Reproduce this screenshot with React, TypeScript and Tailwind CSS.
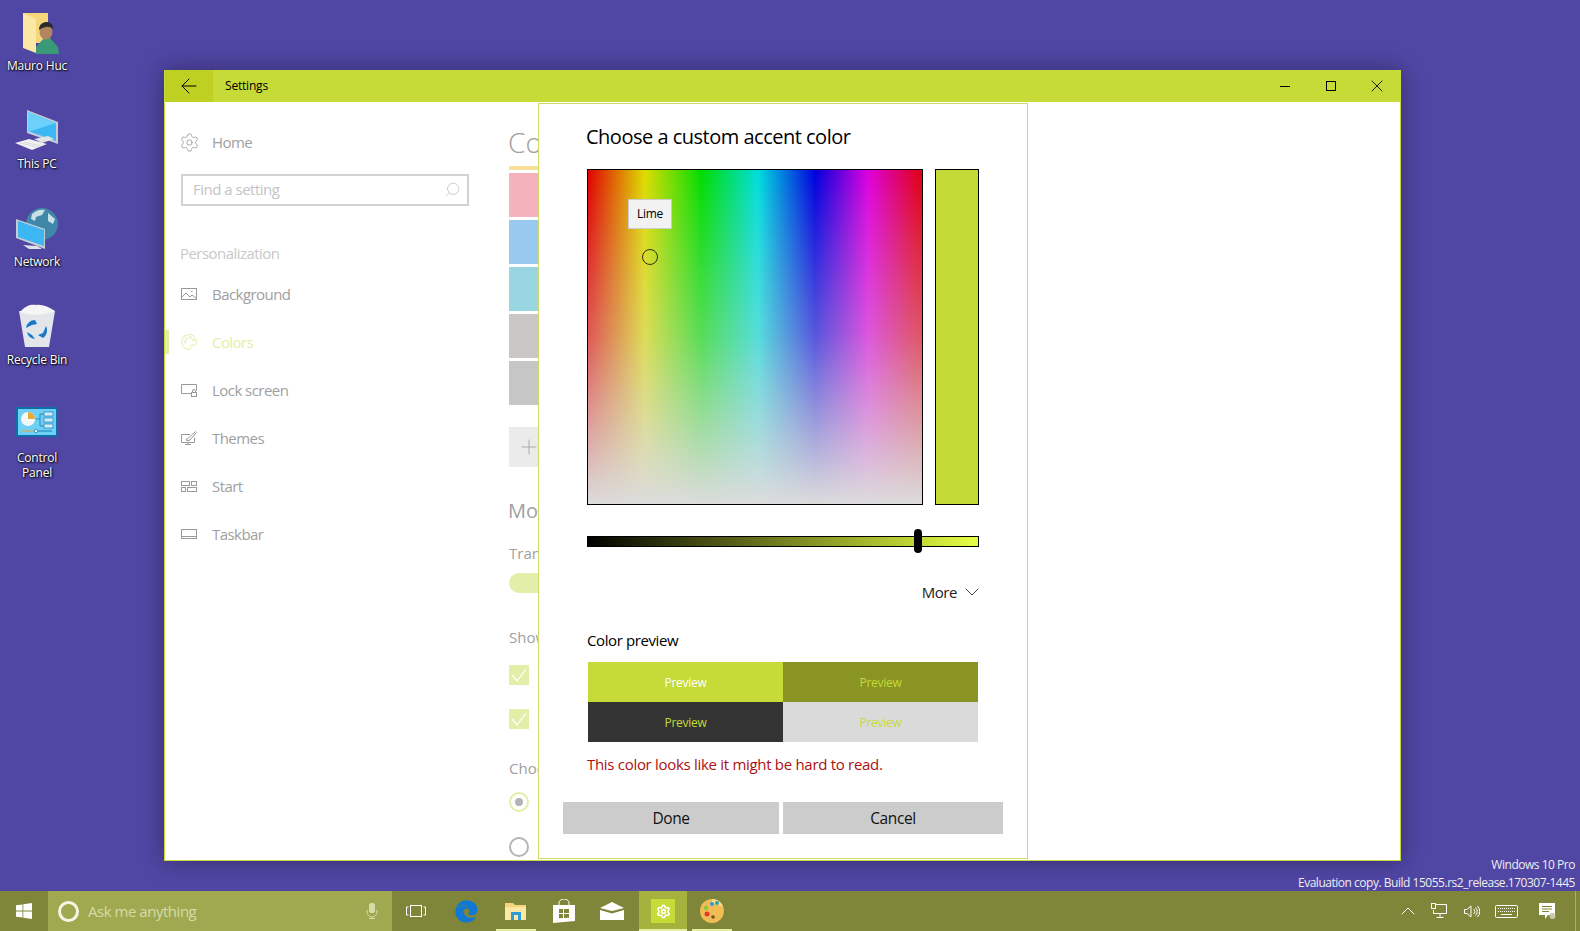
import { ArrowLeft, ChevronDown, ChevronUp, Plus, Search, Settings, X } from "lucide-react";
import { FaEdge } from "react-icons/fa";
import type { ReactNode } from "react";

const font = "font-['Open_Sans','Noto_Sans',sans-serif]";

function UserFolderIcon() {
  return (
    <svg width="44" height="44" viewBox="0 0 44 44">
      <path d="M8 1h25v30H8z" fill="#f6d67a" />
      <path d="M8 1l13 6v34L8 36z" fill="#fbe7a6" />
      <path d="M21 35l8-9h6l8 9 1 7H21z" fill="#3a9a78" />
      <ellipse cx="31" cy="20" rx="6.5" ry="7.5" fill="#b08560" />
      <path d="M24 18c0-6 4-8 8-8s6 3 6 7c-3-3-8-3-14 1z" fill="#2b2b2b" />
    </svg>
  );
}

function PcIcon() {
  return (
    <svg width="46" height="44" viewBox="0 0 46 44">
      <path d="M13 0l31 12v22L13 23z" fill="#c5ccd3" />
      <path d="M14 2l28 11v18L14 21z" fill="#3cb7f4" />
      <path d="M14 2l28 11-28 9z" fill="#6bd0fb" />
      <path d="M20 29l14-3 6 3-12 4z" fill="#dfe3e6" />
      <path d="M1 33l14-4 18 5-15 6z" fill="#f0f0f0" />
      <path d="M6 33l17 4M10 32l17 4" stroke="#c8ccd0" strokeWidth="0.6" />
    </svg>
  );
}

function NetworkIcon() {
  return (
    <svg width="44" height="44" viewBox="0 0 44 44">
      <circle cx="27" cy="16" r="16" fill="#3f87a8" />
      <path d="M17 6c4-4 9-5 13-4l-3 5-6 2-1 4-4-2zM33 5l7 6-2 5-5-3z" fill="#c9e0e8" />
      <path d="M1 11l29 10v20L1 30z" fill="#c5ccd3" />
      <path d="M3 13l26 9v16L3 29z" fill="#3cb7f4" />
      <path d="M8 37l14 1 5 3H14z" fill="#dfe3e6" />
    </svg>
  );
}

function BinIcon() {
  return (
    <svg width="44" height="46" viewBox="0 0 44 46">
      <path d="M4 7l36 0-6 36-24 0z" fill="#e2e6ea" />
      <path d="M5 8c6-7 12-8 16-7 6-1 13 2 19 6-8 4-26 5-35 1z" fill="#f5f5f5" />
      <path d="M11 24a9 9 0 0 1 9-8l2 4-5 1zM31 22a9 9 0 0 1-3 12l-5-3 5-2zM12 28l5 3 3 4a9 9 0 0 1-8-7z" fill="#1a78c8" />
    </svg>
  );
}

function ControlPanelIcon() {
  return (
    <svg width="42" height="30" viewBox="0 0 42 30" className="mb-[11px]">
      <rect width="42" height="30" fill="#0f6ea8" />
      <rect x="2" y="2" width="38" height="26" fill="#6fd0f5" />
      <circle cx="12" cy="12" r="7" fill="#f4f8fb" />
      <path d="M12 5a7 7 0 0 1 7 7h-7z" fill="#e9a93a" />
      <rect x="28" y="5" width="9" height="4" fill="#cfeefa" stroke="#1b7cb5" strokeWidth="0.7" />
      <rect x="28" y="11" width="9" height="4" fill="#cfeefa" stroke="#1b7cb5" strokeWidth="0.7" />
      <rect x="28" y="17" width="9" height="4" fill="#cfeefa" stroke="#1b7cb5" strokeWidth="0.7" />
      <path d="M20 12h4V7h4M24 12v7h4" fill="none" stroke="#1b7cb5" strokeWidth="0.8" />
      <path d="M6 24h12" stroke="#e9a93a" strokeWidth="1" />
      <path d="M22 24h14" stroke="#1b7cb5" strokeWidth="1" />
      <circle cx="20" cy="24" r="1.7" fill="#eaf8fd" stroke="#1b7cb5" strokeWidth="0.7" />
    </svg>
  );
}

function DesktopIcon({ icon, label, top }: { icon: ReactNode; label: ReactNode; top: string }) {
  return (
    <div className={`absolute left-0 w-[74px] flex flex-col items-center ${top}`}>
      <div className="h-[46px] flex items-end justify-center">{icon}</div>
      <div className="mt-[2px] text-center text-[12px] leading-[15px] tracking-[-0.2px] text-white [text-shadow:1px_1px_2px_#000,0_0_2px_#000]">
        {label}
      </div>
    </div>
  );
}

function NavRow({ icon, label, active }: { icon: ReactNode; label: string; active?: boolean }) {
  return (
    <div className="relative flex h-12 items-center pl-4">
      {active && <div className="absolute left-0 top-3 h-6 w-1 bg-[#e3eea8]" />}
      <div className={`flex w-4 justify-center ${active ? "text-[#e3eea8]" : "text-[#9a9a9a]"}`}>{icon}</div>
      <span className={`ml-[15px] text-[15px] tracking-[-0.55px] ${active ? "text-[#e3eea8]" : "text-[#a0a0a0]"}`}>{label}</span>
    </div>
  );
}

function PreviewCell({ bg, text }: { bg: string; text: string }) {
  return <div className={`flex items-center justify-center pt-px text-[12px] tracking-[-0.3px] ${bg} ${text}`}>Preview</div>;
}

function Swatch({ color }: { color: string }) {
  return <div className={`h-11 w-[44px] ${color}`} />;
}

const BackgroundIcon = (
  <svg width="16" height="12" viewBox="0 0 16 12" fill="none" stroke="currentColor">
    <rect x="0.5" y="0.5" width="15" height="11" />
    <path d="M1 9l4-4 4 4 2-2 4 3M10 3.5h1.5" />
  </svg>
);
const PaletteIcon = (
  <svg width="16" height="16" viewBox="0 0 16 16" fill="none" stroke="currentColor">
    <path d="M8 .5a7.5 7.5 0 1 0 0 15c1.5 0 2-1 1.6-2-.5-1.300.3-2.500 1.700-2.500h2.400c1.200 0 1.800-1 1.800-2.500C15.500 3.500 12 .5 8 .5z" />
    <circle cx="4" cy="8" r="1" />
    <circle cx="5.500" cy="4.500" r="1" />
    <circle cx="9.500" cy="3.500" r="1" />
    <circle cx="12.500" cy="6" r="1" />
  </svg>
);
const LockIcon = (
  <svg width="16" height="13" viewBox="0 0 16 13" fill="none" stroke="currentColor">
    <path d="M10 9.500H.5v-9h15v6" />
    <rect x="10.500" y="8.500" width="5" height="4" />
    <path d="M11.500 8.500V7a1.500 1.500 0 0 1 3 0v1.500" />
  </svg>
);
const ThemesIcon = (
  <svg width="16" height="14" viewBox="0 0 16 14" fill="none" stroke="currentColor">
    <path d="M9 3.500H.5v8h13V7M7 11.500v2M4 13.500h6" />
    <path d="M5 8.500l2-1 7.500-7 1 1-6.500 7.500-3 1z" />
  </svg>
);
const StartIcon = (
  <svg width="16" height="11" viewBox="0 0 16 11" fill="none" stroke="currentColor">
    <rect x="0.500" y="0.500" width="8" height="4" />
    <rect x="10.500" y="0.500" width="5" height="4" />
    <rect x="0.500" y="6.500" width="4" height="4" />
    <rect x="6.500" y="6.500" width="9" height="4" />
  </svg>
);
const TaskbarIcon = (
  <svg width="16" height="10" viewBox="0 0 16 10" fill="none" stroke="currentColor">
    <rect x="0.500" y="0.500" width="15" height="9" />
    <path d="M1 7.500h14" />
  </svg>
);

function ColorDialog() {
  return (
    <div className="absolute left-[538px] top-[103px] flex h-[756px] w-[490px] flex-col border border-[#cfdc6a] bg-white text-black">
      <h2 className="ml-[47px] mt-[18px] text-[20px] leading-[30px] tracking-[-0.5px]">Choose a custom accent color</h2>

      <div className="ml-[48px] mt-[17px] flex gap-3">
        <div className="relative h-[336px] w-[336px] border border-black bg-[linear-gradient(to_bottom,transparent_0%,rgba(220,220,220,0.4)_50%,#dcdcdc_100%),linear-gradient(to_right,#e00000,#dedc00_17%,#00dd00_34%,#00dddd_51%,#0000dd_68%,#dd00dd_84%,#e00010)]">
          <div className="absolute left-[40px] top-[29px] flex h-[30px] w-[44px] items-center justify-center border border-[#cccccc] bg-[#f2f2f2] text-[12px] tracking-[-0.3px]">
            Lime
          </div>
          <div className="absolute left-[54px] top-[79px] h-4 w-4 rounded-full border-[1.5px] border-[#2c3310]" />
        </div>
        <div className="h-[336px] w-[44px] border border-black bg-[#c4da36]" />
      </div>

      <div className="relative ml-[48px] mt-[31px] h-[11px] w-[392px] border border-black bg-[linear-gradient(to_right,#000000,#c4da36_85%,#e6ff44)]">
        <div className="absolute left-[326px] top-[-8px] h-6 w-2 rounded-full bg-black" />
      </div>

      <div className="ml-[48px] mt-[33px] flex h-6 w-[392px] items-center justify-end gap-[3px]">
        <span className="pt-px text-[15px] tracking-[-0.45px] text-[#222]">More</span>
        <ChevronDown size={24} strokeWidth={1} className="-mr-[5px] text-[#444]" />
      </div>

      <div className="ml-[48px] mt-[25px] text-[15px] leading-[22px] tracking-[-0.4px]">Color preview</div>

      <div className="ml-[49px] mt-[11px] grid h-[80px] w-[390px] grid-cols-[195px_195px] grid-rows-2">
        <PreviewCell bg="bg-[#c6da38]" text="text-white" />
        <PreviewCell bg="bg-[#899423]" text="text-[#c6da38]" />
        <PreviewCell bg="bg-[#333333]" text="text-[#c6da38]" />
        <PreviewCell bg="bg-[#dadada]" text="text-[#c6da38]" />
      </div>

      <div className="ml-[48px] mt-[11px] text-[15px] leading-[22px] tracking-[-0.3px] text-[#ad1010]">
        This color looks like it might be hard to read.
      </div>

      <div className="ml-[24px] mt-[27px] flex gap-1">
        <button className="h-8 w-[216px] bg-[#cccccc] pt-px text-[15.5px] tracking-[-0.4px] text-[#111]">Done</button>
        <button className="h-8 w-[220px] bg-[#cccccc] pt-px text-[15.5px] tracking-[-0.4px] text-[#111]">Cancel</button>
      </div>
    </div>
  );
}

function SettingsWindow() {
  return (
    <div className="absolute left-[164px] top-[70px] flex h-[791px] w-[1237px] flex-col border-x border-b border-[#c6da38] bg-white shadow-[0_0_22px_rgba(0,0,0,0.35)]">
      <div className="flex h-8 shrink-0 items-center bg-[#c6da38] text-black">
        <div className="flex h-8 w-12 items-center justify-center bg-[#bed021]">
          <ArrowLeft size={24} strokeWidth={1} />
        </div>
        <span className="ml-3 text-[12px] tracking-[-0.2px]">Settings</span>
        <div className="ml-auto flex">
          <div className="flex h-8 w-[46px] items-center justify-center"><div className="h-px w-[10px] bg-black" /></div>
          <div className="flex h-8 w-[46px] items-center justify-center"><div className="h-[10px] w-[10px] border border-black" /></div>
          <div className="flex h-8 w-[46px] items-center justify-center"><X size={20} strokeWidth={1} /></div>
        </div>
      </div>

      <div className="flex min-h-0 flex-1">
        <div className="w-[344px] shrink-0 pt-[16px]">
          <NavRow icon={<Settings size={21} strokeWidth={1} className="shrink-0" />} label="Home" />
          <div className="ml-4 mt-[8px] flex h-8 w-[288px] items-center justify-between border-2 border-[#d2d2d2] pb-px pl-[10px] pr-[6px]">
            <span className="text-[15px] tracking-[-0.5px] text-[#c4c4c4]">Find a setting</span>
            <Search size={17} strokeWidth={1} className="-scale-x-100 text-[#bbbbbb]" />
          </div>
          <div className="ml-[15px] mt-[37px] text-[15px] leading-[20px] tracking-[-0.55px] text-[#c8c8c8]">Personalization</div>
          <div className="mt-[7px]">
            <NavRow icon={BackgroundIcon} label="Background" />
            <NavRow icon={PaletteIcon} label="Colors" active />
            <NavRow icon={LockIcon} label="Lock screen" />
            <NavRow icon={ThemesIcon} label="Themes" />
            <NavRow icon={StartIcon} label="Start" />
            <NavRow icon={TaskbarIcon} label="Taskbar" />
          </div>
        </div>

        {/* rest of this column sits behind the dialog, only the start of each line shows */}
        <div className="min-w-0 flex-1 pt-[21px] text-[#a0a0a0]">
          <div className="-ml-px text-[28px] font-light leading-[38px]">Co</div>
          <div className="mt-[5px] h-1 w-[44px] bg-[#fbe09a]" />
          <div className="mt-[3px] flex flex-col gap-[3px]">
            <Swatch color="bg-[#f4b3bc]" />
            <Swatch color="bg-[#99c9ee]" />
            <Swatch color="bg-[#98d6e1]" />
            <Swatch color="bg-[#c9c8c6]" />
            <Swatch color="bg-[#c6c6c6]" />
          </div>
          <div className="mt-[22px] flex h-10 w-10 items-center justify-center bg-[#ebebeb]">
            <Plus size={24} strokeWidth={1} className="text-[#aaaaaa]" />
          </div>
          <div className="-ml-px mt-[27px] text-[20px] leading-[34px] text-[#a0a0a0]">Mo</div>
          <div className="mt-[15px] text-[15px] leading-[20px]">Trans</div>
          <div className="mt-[10px] h-5 w-[44px] rounded-full bg-[#e3eea8]" />
          <div className="mt-[34px] text-[15px] leading-[20px]">Show</div>
          <div className="mt-[18px] flex h-5 w-5 items-center justify-center bg-[#e3eea8]">
            <svg width="16" height="14" viewBox="0 0 16 14" fill="none" stroke="#fff" strokeWidth="1.200"><path d="M1 7l5 6L15 1" /></svg>
          </div>
          <div className="mt-[24px] flex h-5 w-5 items-center justify-center bg-[#e3eea8]">
            <svg width="16" height="14" viewBox="0 0 16 14" fill="none" stroke="#fff" strokeWidth="1.200"><path d="M1 7l5 6L15 1" /></svg>
          </div>
          <div className="mt-[29px] text-[15px] leading-[20px]">Choo</div>
          <div className="mt-[14px] flex h-5 w-5 items-center justify-center rounded-full border-2 border-[#e3eea8]">
            <div className="h-2 w-2 rounded-full bg-[#b4b4b4]" />
          </div>
          <div className="mt-[25px] h-5 w-5 rounded-full border-2 border-[#b4b4b4]" />
        </div>
      </div>
    </div>
  );
}

function Taskbar() {
  return (
    <div className="relative flex h-10 shrink-0 items-center bg-[#7f8639] text-white">
      <div className="flex h-10 w-12 items-center justify-center">
        <svg width="16" height="16" viewBox="0 0 16 16" fill="#fff">
          <path d="M0 2.300l6.500-.9v6.200H0zM7.300 1.300L16 0v7.600H7.300zM0 8.400h6.500v6.200L0 13.700zM7.300 8.400H16V16l-8.700-1.300z" />
        </svg>
      </div>
      <div className="flex h-10 w-[344px] items-center bg-[#a0a94f] pl-[10px]">
        <div className="h-[21px] w-[21px] rounded-full border-[3px] border-[#f4f6e4]" />
        <span className="ml-[9px] text-[15px] tracking-[-0.47px] text-[#d6dbab]">Ask me anything</span>
        <svg className="ml-auto mr-[14px]" width="12" height="16" viewBox="0 0 12 16" fill="none" stroke="#d6dbab">
          <rect x="3.500" y="0.500" width="5" height="9" rx="1.500" fill="#d6dbab" />
          <path d="M1 7v2a5 5 0 0 0 10 0V7M6 14v2M3 15.500h6" />
        </svg>
      </div>

      <div className="flex h-10 w-[48px] items-center justify-center">
        <svg width="20" height="12" viewBox="0 0 20 12" fill="none" stroke="#fff">
          <rect x="4.500" y="0.500" width="11" height="11" />
          <path d="M2.500 2H.500v8h2M17.500 2h2v8h-2" />
        </svg>
      </div>
      <div className="flex h-10 w-[52px] items-center justify-center"><FaEdge size={23} className="text-[#0f78d4]" /></div>

      <div className="relative flex h-10 w-[48px] items-center justify-center">
        <svg width="22" height="18" viewBox="0 0 22 18">
          <path d="M0 1h8l2 2h11v15H0z" fill="#f6d67a" />
          <path d="M0 5h21v13H0z" fill="#fbe7a6" />
          <path d="M6 10h10v8H6z" fill="#2f9ad8" />
          <path d="M9 13h4v5H9z" fill="#fbe7a6" />
        </svg>
        <div className="absolute bottom-0 left-[4px] h-[2px] w-10 bg-[#e3eea0]" />
      </div>
      <div className="flex h-10 w-[48px] items-center justify-center">
        <svg width="22" height="24" viewBox="0 0 22 24" fill="#fff">
          <path d="M0 6h22v16l-22 2z" />
          <path d="M6 6V4a5 4 0 0 1 10 0v2" fill="none" stroke="#fff" strokeWidth="1" />
          <path d="M6 10h4v4H6zM11 10h5v4h-5zM6 15h4v4l-4 .3zM11 15h5v3.700l-5 .3z" fill="#7f8639" />
        </svg>
      </div>
      <div className="flex h-10 w-[48px] items-center justify-center">
        <svg width="24" height="18" viewBox="0 0 24 18" fill="#fff">
          <path d="M0 6l12-6 12 6-12 3z" />
          <path d="M0 8l12 3.500L24 8v10H0z" />
        </svg>
      </div>
      <div className="relative ml-[3px] flex h-10 w-[48px] items-center justify-center bg-[#a5b23e]">
        <div className="flex h-6 w-6 items-center justify-center bg-[#c6da38]">
          <Settings size={15} strokeWidth={2.500} className="text-white" />
        </div>
        <div className="absolute bottom-0 left-0 h-[2px] w-12 bg-[#e3eea0]" />
      </div>
      <div className="relative ml-[5px] flex h-10 w-10 items-center justify-center">
        <svg width="24" height="24" viewBox="0 0 24 24">
          <circle cx="12" cy="12" r="12" fill="#f0bc55" />
          <path d="M12 0a12 12 0 0 1 11 8c-5-3-9-4-14-1 4-3 3-6 3-7z" fill="#f8da90" />
          <circle cx="7" cy="15" r="2.500" fill="#e33a2a" />
          <circle cx="6" cy="9" r="2.200" fill="#8cc63f" />
          <circle cx="12" cy="5" r="2" fill="#2f9ad8" />
          <circle cx="17" cy="4" r="2" fill="#2aa5a0" />
          <circle cx="13" cy="18" r="1.800" fill="#6b5a20" />
        </svg>
        <div className="absolute bottom-0 left-0 h-[2px] w-10 bg-[#e3eea0]" />
      </div>

      <div className="ml-auto flex items-center">
        <ChevronUp size={24} strokeWidth={1} />
        <svg className="ml-[11px]" width="16" height="16" viewBox="0 0 16 16" fill="none" stroke="#fff">
          <path d="M5 1.500h10.500v9h-13V7M9 10.500v4M5.500 14.500h7" />
          <rect x="0.500" y="0.500" width="4" height="5" />
        </svg>
        <svg className="ml-[17px]" width="16" height="13" viewBox="0 0 16 13" fill="none" stroke="#fff">
          <path d="M.5 4.500h2.500L7 1v11L3 8.500H.5zM9.500 4a3 3 0 0 1 0 5M11.500 2.500a5.500 5.500 0 0 1 0 8M13.500 1a8 8 0 0 1 0 11" />
        </svg>
        <svg className="ml-[15px]" width="23" height="13" viewBox="0 0 23 13" fill="none" stroke="#fff">
          <rect x="0.500" y="0.500" width="22" height="12" rx="1" />
          <path d="M3 3.500h17M3 6.500h17" strokeDasharray="1 1" />
          <path d="M6 9.500h11" />
        </svg>
        <svg className="ml-[21px]" width="17" height="17" viewBox="0 0 17 17" fill="#fff">
          <path d="M0 0h16v12H9l-3 4v-4H0z" />
          <path d="M3 3.500h10M3 6h10M3 8.500h7" stroke="#7f8639" />
          <circle cx="13.500" cy="13" r="3" fill="#c8ccaa" />
        </svg>
        <div className="ml-[19px] mr-[4px] h-10 w-px bg-[#a9ae72]" />
      </div>
    </div>
  );
}

export default function App() {
  return (
    <div className={`${font} flex h-[931px] w-[1580px] flex-col overflow-hidden bg-[#5046a4]`}>
      <div className="relative min-h-0 flex-1">
        <DesktopIcon top="top-[10px]" icon={<UserFolderIcon />} label="Mauro Huc" />
        <DesktopIcon top="top-[108px]" icon={<PcIcon />} label="This PC" />
        <DesktopIcon top="top-[206px]" icon={<NetworkIcon />} label="Network" />
        <DesktopIcon top="top-[304px]" icon={<BinIcon />} label="Recycle Bin" />
        <DesktopIcon top="top-[402px]" icon={<ControlPanelIcon />} label={<>Control<br />Panel</>} />
        <SettingsWindow />
        <ColorDialog />
        <div className="absolute bottom-[-1px] right-[5px] text-right text-[12px] leading-[18px] tracking-[-0.48px] text-[#eeeeee]">
          <div>Windows 10 Pro</div>
          <div>Evaluation copy. Build 15055.rs2_release.170307-1445</div>
        </div>
      </div>
      <Taskbar />
    </div>
  );
}
